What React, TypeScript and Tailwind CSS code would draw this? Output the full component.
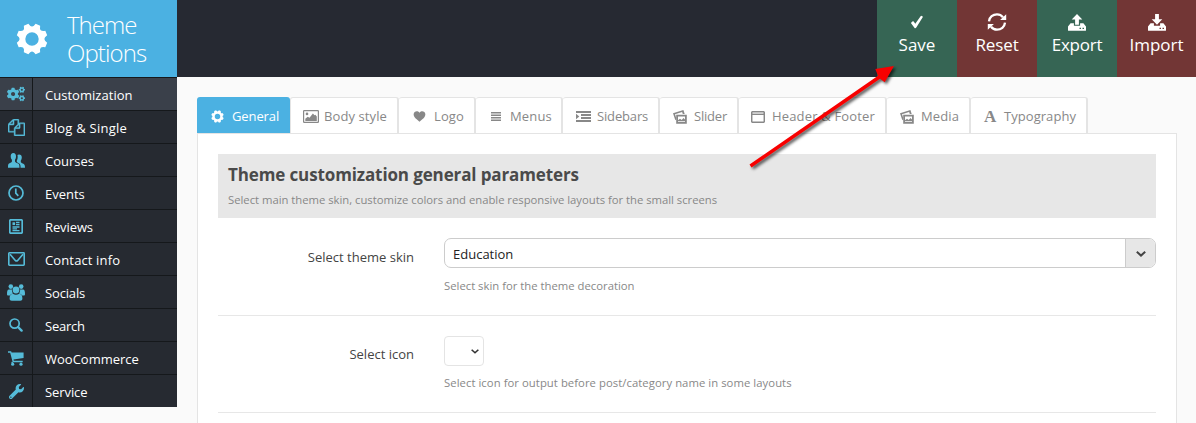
import type { ReactNode } from "react";
import { FaCogs, FaWrench } from "react-icons/fa";

type IconProps = { className?: string };

const gearOutline = Array.from({ length: 8 }, (_, i) => {
  const point = (deg: number, r: number) => {
    const a = (deg * Math.PI) / 180;
    return `${(16 + r * Math.cos(a)).toFixed(2)} ${(16 + r * Math.sin(a)).toFixed(2)}`;
  };
  const c = i * 45 + 22.5;
  const start = i === 0 ? `M${point(c - 9, 15.6)}` : `L${point(c - 9, 15.6)}`;
  return `${start}L${point(c + 9, 15.6)}Q${point(c + 15, 12.4)} ${point(c + 22.5, 12.4)}Q${point(c + 30, 12.4)} ${point(c + 36, 15.6)}`;
}).join("");

const Gear = ({ className }: IconProps) => (
  <svg viewBox="0 0 32 32" className={className} fill="currentColor" fillRule="evenodd">
    <path d={gearOutline + "ZM16 9.300a6.700 6.700 0 1 0 0 13.400a6.700 6.700 0 1 0 0-13.400Z"} />
  </svg>
);

const Files = () => (
  <svg viewBox="0 0 1792 1792" className="size-[17px]" fill="currentColor" stroke="currentColor" strokeWidth="40">
    <path d="M1696 384q40 0 68 28t28 68v1216q0 40-28 68t-68 28h-960q-40 0-68-28t-28-68v-288h-544q-40 0-68-28t-28-68v-672q0-40 20-88t48-76l408-408q28-28 76-48t88-20h416q40 0 68 28t28 68v328q68-40 128-40h416zm-544 213l-299 299h299v-299zm-640-384l-299 299h299v-299zm196 647l316-316v-416h-384v416q0 40-28 68t-68 28h-416v640h512v-256q0-40 20-88t48-76zm956 804v-1152h-384v416q0 40-28 68t-68 28h-416v640h896z" />
  </svg>
);

const Pair = () => (
  <svg viewBox="0 0 17 15" className="h-[15px] w-[17px]" fill="currentColor">
    <path d="M5.3 0C7.2 0 8 1.300 8 3.300c0 1.500-.3 2.700-1 3.500v1.700c.3.900 1.300 1.200 2.600 1.800 1.500.7 1.900 1.200 1.900 4.400H0c0-3 .2-3.900 1.500-4.500 1.400-.6 2.200-.8 2.400-1.700V6.800c-.8-.9-1.200-2-1.200-3.500C2.700 1.300 3.500 0 5.300 0Z" />
    <path d="M11 1.500c1.900 0 2.800 1.200 2.800 3 0 1.300-.4 2.300-1 3v1.600c.2.700 1 1 2 1.500 1.500.7 2.200 1.200 2.200 4.100h-4.400c0-3-.4-3.900-2.700-5-.7-.3-1-.6-1.100-1V7.500c.6-.9.9-2.100.9-3.600 0-.8-.1-1.400-.3-1.900.4-.3.900-.5 1.600-.5Z" />
  </svg>
);

const Clock = () => (
  <svg viewBox="0 0 16 16" className="size-4" fill="none" stroke="currentColor" strokeWidth="1.700">
    <circle cx="8" cy="8" r="7" />
    <path d="M7.800 3.500V8.200l2.500 2.600" />
  </svg>
);

const News = () => (
  <svg viewBox="0 0 14 15" className="h-[15px] w-[14px]" fill="none" stroke="currentColor">
    <rect x=".8" y=".8" width="12.400" height="13.400" rx="1" strokeWidth="1.700" />
    <path d="M7 3.500h3.500M7 5.600h3.500M3.500 8h7M3.500 9.900h4.500M3.500 11.700h7" strokeWidth="1.300" />
    <path d="M3.500 4.700h2.600" strokeWidth="2.800" />
  </svg>
);

const Mail = () => (
  <svg viewBox="0 0 17 14" className="h-[14px] w-[17px]" fill="none" stroke="currentColor" strokeWidth="1.600">
    <rect x=".8" y=".8" width="15.400" height="12.400" rx=".6" />
    <path d="M2 2.200 7.300 8.400q1.200 1.200 2.400 0L15 2.200" />
  </svg>
);

const Crowd = () => (
  <svg viewBox="0 0 18 17" className="h-[17px] w-[18px]" fill="currentColor">
    <circle cx="3.800" cy="2.600" r="2.300" />
    <circle cx="14.200" cy="2.600" r="2.300" />
    <path d="M2 5.500h3c-.3 2 .3 3 1.100 3.900-1.600.4-2.600 1-3.100 2.100H1.300C.5 11.500 0 11 0 10.200 0 7.500.4 5.500 2 5.500ZM16 5.500h-3c.3 2-.3 3-1.100 3.900 1.600.4 2.600 1 3.100 2.100h1.700c.8 0 1.300-.5 1.300-1.300 0-2.700-.4-4.700-2-4.700Z" />
    <circle cx="9" cy="6" r="3.400" />
    <path d="M5.800 9.800q3.200 1.800 6.400 0c2.500.2 3.200 2.200 3.200 4.800 0 1.500-.8 2.200-2.200 2.200H4.800c-1.400 0-2.200-.7-2.200-2.200 0-2.600.7-4.600 3.200-4.800Z" />
  </svg>
);

const Search = () => (
  <svg viewBox="0 0 14 14" className="size-[14px]" fill="none" stroke="currentColor">
    <circle cx="5.600" cy="5.600" r="4.600" strokeWidth="1.700" />
    <path d="m9 9 3.600 3.600" strokeWidth="2.400" strokeLinecap="round" />
  </svg>
);

const Cart = () => (
  <svg viewBox="0 0 16 15" className="h-[15px] w-4" fill="currentColor">
    <path d="M0 .2h3.100l.5 1.300H15.600v5.400L5.500 8.500l.3 1.200h8.900v1.500H4.700L2.200 1.700H0Z" />
    <path d="M3.400 10.900h1.700v1H3.400z" />
    <circle cx="4.700" cy="13.200" r="1.600" />
    <circle cx="13" cy="13.200" r="1.600" />
  </svg>
);

const Check = () => (
  <svg viewBox="0 0 14 14" className="size-[14px]" fill="currentColor">
    <path d="M.9 7.900 2.700 6.300Q3.200 6 3.700 6.500L5.300 8.800 10.600 1.200Q11.100.6 11.700.9L13 1.700 6.300 12.600Q5.300 13.800 4.400 12.700Z" />
  </svg>
);

const Cycle = () => (
  <svg viewBox="0 0 20 18" className="h-[18px] w-5" fill="none" stroke="currentColor" strokeWidth="2.300">
    <path d="M2 8.300C2.400 4 6 1.300 10 1.300c2.500 0 4.500 1 6 2.900M18 9.700C17.600 14 14 16.700 10 16.700c-2.500 0-4.500-1-6-2.900" />
    <path d="M19.200 1.200V7h-6.100ZM.8 16.800V11h6.100Z" fill="currentColor" stroke="none" />
  </svg>
);

const Drive = ({ up }: { up: boolean }) => (
  <svg viewBox="0 0 18 17" className="h-[17px] w-[18px]" fill="currentColor">
    {up ? (
      <path d="M9 0l5.300 5.600h-3.400v5.200H7.100V5.600H3.700Z" />
    ) : (
      <path d="M7.100 0h3.800v5.200h3.400L9 10.800 3.700 5.200h3.400Z" />
    )}
    <path
      fillRule="evenodd"
      d="M2.600 9.300h3.300v2.500h6.200V9.300h3.300L18 12.600v3.600q0 .6-.6.6H.6q-.6 0-.6-.6v-3.600Zm8.900 4.500v1.200h1.500v-1.200Zm3 0v1.200H16v-1.200Z"
    />
  </svg>
);

const Picture = () => (
  <svg viewBox="0 0 16 13" className="h-[13px] w-4" fill="currentColor">
    <rect x=".6" y=".6" width="14.800" height="11.800" rx=".6" fill="none" stroke="currentColor" strokeWidth="1.200" />
    <circle cx="4" cy="3.900" r="1.300" />
    <path d="M2.300 11V8.800l2.400-2 1.800 1 3.400-4.300 1.600 1.700.9-.5 1.400 1.800V11Z" />
  </svg>
);

const Heart = () => (
  <svg viewBox="0 0 13 12" className="h-[11px] w-[13px]" fill="currentColor">
    <path d="M6.500 2C8 .1 10 0 11.400.9 13.300 2.200 13.300 4.700 12 6.600 10.900 8.300 8.500 9.900 6.500 11.800 4.500 9.900 2.100 8.300 1 6.600-.3 4.700-.3 2.200 1.600.9 3 0 5 .1 6.500 2Z" />
  </svg>
);

const Lines = () => (
  <svg viewBox="0 0 10 9" className="h-[9px] w-[10px]" fill="currentColor">
    <path d="M0 0h10v1.500H0zM0 2.500h10v1.500H0zM0 5h10v1.500H0zM0 7.500h10v1.500H0z" />
  </svg>
);

const Indent = () => (
  <svg viewBox="0 0 15 11" className="h-[11px] w-[15px]" fill="currentColor">
    <path d="M0 0h15v2H0zM5 3h10v2H5zM5 6h10v2H5zM0 9h15v2H0zM0 2.800l3.300 2.700L0 8.200Z" />
  </svg>
);

const Photos = () => (
  <svg viewBox="0 0 14 14" className="size-[14px]" fill="currentColor" fillRule="evenodd">
    <path d="M0 3.200 10.400 0l1.300 3.900H9.800l-.7-1.900L2 4.300l1 3v3L2.100 9.600Z" />
    <path d="M3.200 4.800h10.600v9H3.200ZM5 6.600v3.600l2-1.500 1.700 1.200 1.800-1.800 1.500 1.400V6.600ZM5 12h7v-.8H5Z" />
  </svg>
);

const Browser = () => (
  <svg viewBox="0 0 14 12" className="h-[12px] w-[14px]" fill="none" stroke="currentColor">
    <rect x=".7" y=".7" width="12.600" height="10.600" rx="1" strokeWidth="1.500" />
    <path d="M1 3.300h12" strokeWidth="1.400" />
  </svg>
);

const Chevron = ({ className }: IconProps) => (
  <svg viewBox="0 0 10 6" className={className} fill="none" stroke="currentColor" strokeWidth="2">
    <path d="M.8.8 5 4.600 9.200.8" />
  </svg>
);

const menu: { label: string; icon: ReactNode; text: string }[] = [
  { label: "Customization", icon: <FaCogs className="size-[18px]" />, text: "tracking-[0.03px]" },
  { label: "Blog & Single", icon: <Files />, text: "tracking-[0.250px]" },
  { label: "Courses", icon: <Pair />, text: "" },
  { label: "Events", icon: <Clock />, text: "" },
  { label: "Reviews", icon: <News />, text: "tracking-[-0.1px]" },
  { label: "Contact info", icon: <Mail />, text: "tracking-[0.130px]" },
  { label: "Socials", icon: <Crowd />, text: "tracking-[-0.150px]" },
  { label: "Search", icon: <Search />, text: "tracking-[-0.250px]" },
  { label: "WooCommerce", icon: <Cart />, text: "" },
  { label: "Service", icon: <FaWrench className="size-[15px]" />, text: "tracking-[-0.080px]" },
];

const actions: { label: string; icon: ReactNode; box: string; text: string }[] = [
  { label: "Save", icon: <Check />, box: "w-20 bg-[#366554]", text: "" },
  { label: "Reset", icon: <Cycle />, box: "w-20 bg-[#723635]", text: "tracking-[-0.1px]" },
  { label: "Export", icon: <Drive up />, box: "w-20 bg-[#366554]", text: "tracking-[-0.250px]" },
  { label: "Import", icon: <Drive up={false} />, box: "w-[79px] bg-[#723635]", text: "" },
];

const tabs: { label: string; icon: ReactNode; box: string; slot: string; text: string }[] = [
  { label: "Body style", icon: <Picture />, box: "w-[109px] border-l pl-3", slot: "w-[21px]", text: "tracking-[0.1px]" },
  { label: "Logo", icon: <Heart />, box: "w-[77px] pl-[14px]", slot: "w-[21px]", text: "tracking-[0.1px]" },
  { label: "Menus", icon: <Lines />, box: "w-[87px] pl-[15px]", slot: "w-[19px]", text: "tracking-[0.150px]" },
  { label: "Sidebars", icon: <Indent />, box: "w-[97px] pl-[13px]", slot: "w-[21px]", text: "tracking-[-0.150px]" },
  { label: "Slider", icon: <Photos />, box: "w-[79px] pl-[13px]", slot: "w-[21px]", text: "tracking-[-0.2px]" },
  { label: "Header & Footer", icon: <Browser />, box: "w-[148px] pl-3", slot: "w-[21px]", text: "tracking-[0.170px]" },
  { label: "Media", icon: <Photos />, box: "w-[84px] pl-[13px]", slot: "w-[21px]", text: "tracking-[0.1px]" },
  {
    label: "Typography",
    icon: <span className="-mt-px font-['Liberation_Serif',serif] text-[17px] leading-none font-bold">A</span>,
    box: "w-[117px] pl-[13px]",
    slot: "w-[20px]",
    text: "tracking-[0.050px]",
  },
];

function Field({
  label,
  hint,
  box,
  labelBox,
  hintBox,
  children,
}: {
  label: string;
  hint: string;
  box: string;
  labelBox: string;
  hintBox: string;
  children: ReactNode;
}) {
  return (
    <div className={`flex border-b border-[#e7e7e7] pt-5 ${box}`}>
      <div className={`w-[196px] shrink-0 text-right text-[13px] leading-[20px] text-[#444] ${labelBox}`}>{label}</div>
      <div className="ml-[30px] flex-1">
        {children}
        <p className={`text-[11.300px] leading-[18px] text-[#888] ${hintBox}`}>{hint}</p>
      </div>
    </div>
  );
}

export default function App() {
  return (
    <div className="relative flex h-[423px] w-[1196px] overflow-hidden bg-[#fafafa] font-['Open_Sans',sans-serif]">
      <aside className="w-[177px] shrink-0">
        <div className="flex h-[77px] items-center bg-[#4bb1e2] text-white">
          <Gear className="ml-4 size-8" />
          <h1 className="ml-[19px] text-2xl leading-[28px] font-light">
            <span className="block tracking-[-1px]">Theme</span>
            <span className="block tracking-[-0.900px]">Options</span>
          </h1>
        </div>
        <nav>
          {menu.map((m, i) => (
            <a
              key={m.label}
              className={`flex h-[33px] border-t border-[#15181b] text-[13px] text-white ${i === 0 ? "bg-[#3a404a]" : "bg-[#262a31]"}`}
            >
              <span className="flex w-[33px] items-center justify-center border-r border-[#15181b] text-[#55bbd8]">
                {m.icon}
              </span>
              <span className={`pt-px pl-3 leading-[32px] ${m.text}`}>{m.label}</span>
            </a>
          ))}
        </nav>
      </aside>

      <div className="flex flex-1 flex-col">
        <header className="flex h-[77px] shrink-0 justify-end bg-[#262932]">
          {actions.map((a) => (
            <button key={a.label} className={`flex flex-col items-center text-[17px] text-white ${a.box}`}>
              <span className="mt-3 flex h-5 items-center">{a.icon}</span>
              <span className={`leading-[26px] ${a.text}`}>{a.label}</span>
            </button>
          ))}
        </header>

        <main className="mt-5 mr-[19px] ml-5 flex flex-1 flex-col">
          <div className="flex h-9 text-[13px] text-[#888]">
            <div className="flex w-[93px] items-center rounded-t-[3px] bg-[#4bb1e2] pl-[14px] text-white">
              <Gear className="mt-[3px] size-[13px]" />
              <span className="mt-[3px] ml-2 tracking-[-0.1px]">General</span>
            </div>
            {tabs.map((t) => (
              <div
                key={t.label}
                className={`flex items-center rounded-t-[3px] border-t border-r-2 border-[#e4e4e4] bg-white ${t.box}`}
              >
                <span className={`mt-[2px] flex shrink-0 items-center ${t.slot}`}>{t.icon}</span>
                <span className={`mt-[3px] whitespace-nowrap ${t.text}`}>{t.label}</span>
              </div>
            ))}
          </div>

          <section className="flex-1 border border-b-0 border-[#e4e4e4] bg-white px-5 pt-5">
            <div className="h-16 bg-[#e7e7e7] px-[10px] pt-[9px]">
              <h2 className="text-[17px] leading-6 font-bold tracking-[-0.120px] text-[#4a4a4a]">
                Theme customization general parameters
              </h2>
              <p className="mt-[4px] text-[11.300px] leading-[18px] tracking-[-0.020px] text-[#888]">
                Select main theme skin, customize colors and enable responsive layouts for the small screens
              </p>
            </div>
            <Field
              label="Select theme skin"
              hint="Select skin for the theme decoration"
              box="h-[98px]"
              labelBox="pt-[9px]"
              hintBox="mt-[9px]"
            >
              <div className="flex h-[30px] overflow-hidden rounded-[7px] border border-[#ccc]">
                <span className="flex-1 pl-2 text-[13px] leading-[31px] text-[#222]">Education</span>
                <span className="flex w-[30px] items-center justify-center border-l border-[#ccc] bg-[#e7e7e7] text-[#444]">
                  <Chevron className="mt-px h-[6px] w-[10px]" />
                </span>
              </div>
            </Field>
            <Field
              label="Select icon"
              hint="Select icon for output before post/category name in some layouts"
              box="h-[97px]"
              labelBox="pt-2"
              hintBox="mt-2 tracking-[0.050px]"
            >
              <div className="flex h-[30px] w-10 items-center justify-end rounded-[4px] border border-[#e4e4e4] pr-1">
                <Chevron className="h-[5px] w-2 text-[#333]" />
              </div>
            </Field>
          </section>
        </main>
      </div>

      <svg
        viewBox="0 0 160 116"
        className="absolute top-[58px] left-[742px] h-[116px] w-40 drop-shadow-[2px_2px_1.500px_rgba(0,0,0,0.650)]"
        fill="#f80000"
      >
        <path d="M7.500 106.500 136 17.800l-2.700-6.800L152 8 142.700 24.300l-4.600-3.600L9.500 109.500Z" />
      </svg>
    </div>
  );
}
